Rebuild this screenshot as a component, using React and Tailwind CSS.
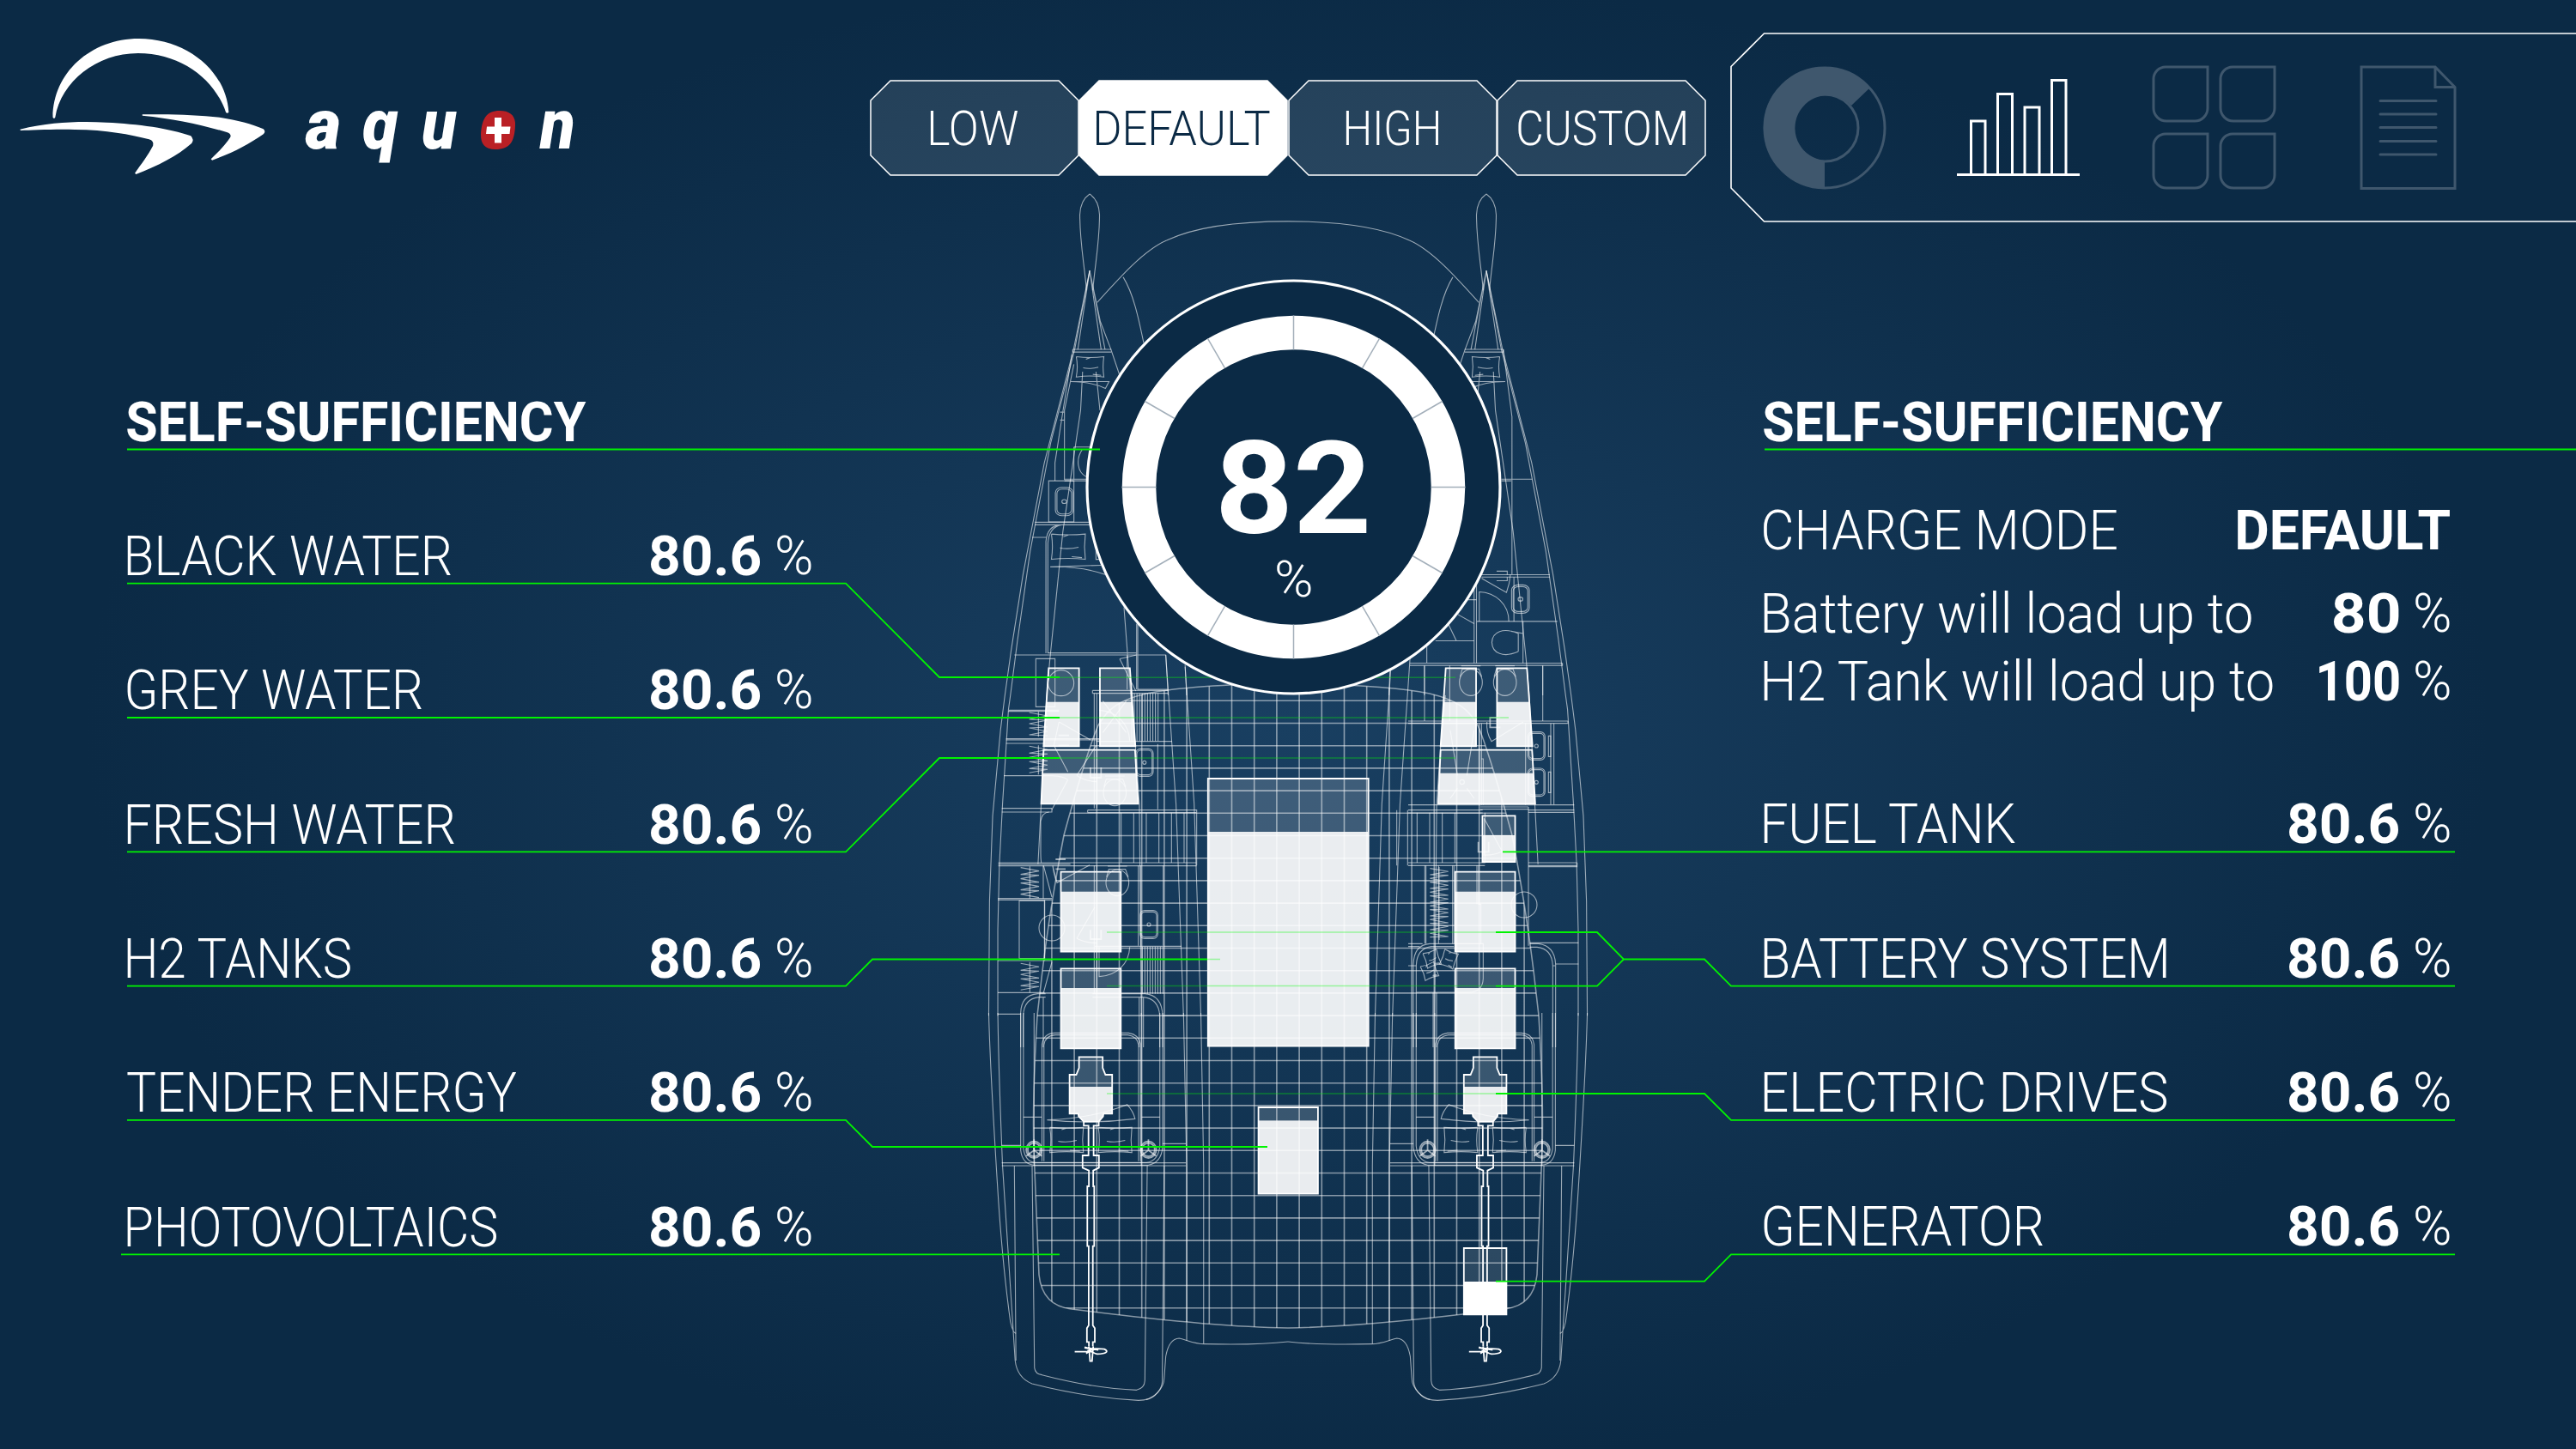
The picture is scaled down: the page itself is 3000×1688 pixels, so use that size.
import React, { useLayoutEffect, useRef, useState } from 'react';

// Stretches a line of text so that its ink is exactly `width` px wide
const Fit = ({ width, className = '', children }) => {
  const ref = useRef(null);
  const [transform, setTransform] = useState('none');

  useLayoutEffect(() => {
    const style = getComputedStyle(ref.current);
    const ctx = document.createElement('canvas').getContext('2d');
    ctx.font = `${style.fontStyle} ${style.fontWeight} ${style.fontSize} ${style.fontFamily}`;
    const m = ctx.measureText(ref.current.textContent);
    const scale = width / (m.actualBoundingBoxLeft + m.actualBoundingBoxRight);
    setTransform(`translateX(${m.actualBoundingBoxLeft * scale}px) scaleX(${scale})`);
  }, [width]);

  return (
    <span className="block shrink-0" style={{ width }}>
      <span ref={ref} className={`inline-block origin-left whitespace-nowrap align-top leading-none ${className}`} style={{ transform }}>
        {children}
      </span>
    </span>
  );
};

const MODES = [
  { label: 'LOW', width: 102 },
  { label: 'DEFAULT', width: 203, active: true },
  { label: 'HIGH', width: 108 },
  { label: 'CUSTOM', width: 195 },
];

const LEFT_ROWS = [
  { label: 'BLACK WATER', width: 377 },
  { label: 'GREY WATER', width: 343 },
  { label: 'FRESH WATER', width: 381 },
  { label: 'H2 TANKS', width: 261 },
  { label: 'TENDER ENERGY', width: 454 },
  { label: 'PHOTOVOLTAICS', width: 430 },
];

const RIGHT_ROWS = [
  { label: 'BATTERY SYSTEM', width: 469 },
  { label: 'ELECTRIC DRIVES', width: 469 },
  { label: 'GENERATOR', width: 325 },
];

const Logo = () => (
  <div className="flex h-[260px] w-[700px] shrink-0">
    <svg width="330" height="230" className="shrink-0">
      <g transform="translate(0 20) scale(0.4592 0.3333)" fill="#fff">
        <path d="M134 350 C134 195 230 75 352 75 C475 75 574 190 580 332 Q577 338 573 333 C545 218 460 126 350 126 C245 126 155 225 140 350 Q137 357 134 350Z" />
        <path d="M51 392 C130 366 200 364 270 368 C350 373 430 388 484 415 Q493 428 486 441 C450 485 400 520 345 549 L342 545 C357 515 376 482 388 449 Q391 432 378 427 C330 410 270 394 190 393 C130 391 80 396 52 396Z" />
        <path d="M361 340 C440 338 500 341 560 351 C600 360 640 373 668 391 Q675 400 668 409 C630 445 590 475 538 500 L535 496 C555 470 572 445 584 420 Q588 408 575 402 C510 375 440 355 361 344Z" />
      </g>
    </svg>
    <div className="flex gap-[28px] pl-[25px] pt-[104px] text-[82px] font-black italic leading-none text-white">
      <Fit width={40}>a</Fit>
      <Fit width={41}>q</Fit>
      <Fit width={40}>u</Fit>
      <svg width="40" height="45" viewBox="0 0 40 45" className="mt-[25px] shrink-0">
        <path d="M22 0 C34 0 41 6 40 18 C39 36 34 45 17 45 C4 45 0 38 0 28 C1 10 6 0 22 0Z" fill="#ba2025" />
        <path d="M16 8 H24 V18.500 H34.500 L33.500 27 H24 V37.500 H16 V27 H6 L7 18.500 H16Z" fill="#fff" />
      </svg>
      <Fit width={40}>n</Fit>
    </div>
  </div>
);

const ModeTab = ({ label, width, active }) => (
  <button className="relative flex h-[112px] w-[243.6px] justify-center pt-[30px]">
    <svg className="absolute inset-0" width="244" height="112">
      <polygon
        points="24,1 220,1 243,24 243,88 220,111 24,111 1,88 1,24"
        fill={active ? '#fff' : 'rgba(255,255,255,0.1)'}
        stroke="#fff"
        strokeWidth="1.500"
      />
    </svg>
    <span className={active ? 'relative text-[#0b2a45]' : 'relative text-white'}>
      <Fit width={width} className="text-[55px] font-light">{label}</Fit>
    </span>
  </button>
);

const BOX = 'h49 a0 0 0 0 1 0 0 v48 a15 15 0 0 1 -15 15 h-33 a15 15 0 0 1 -15 -15 v-34 a14 14 0 0 1 14 -14';

const IconPanel = () => (
  <div className="relative ml-[28px] mt-[38px] flex h-[222px] w-[985px] pl-[38px] pt-[38px]">
    <svg className="absolute inset-0" width="985" height="222" fill="none" stroke="#fff" strokeWidth="1.600">
      <path d="M990 1 H39.500 L1 39.500 V181 L39.500 220 H990" />
    </svg>
    <svg width="144" height="146" viewBox="-72 -73 144 146" fill="none" stroke="#3f576d" strokeWidth="3">
      <circle r="70" />
      <circle r="39" />
      <path d="M0 71 A71 71 0 1 1 53 -47 L31 -26 A38 38 0 1 0 0 38Z" fill="#3f576d" stroke="none" />
    </svg>
    <svg className="ml-[82px]" width="146" height="146" fill="none" stroke="#fff" strokeWidth="3">
      <path d="M0 127.500 H143 M16.500 127 V65 H33 V127 M47.500 127 V33.500 H64.500 V127 M79 127 V49 H96 V127 M110.500 127 V17.500 H127 V127" />
    </svg>
    <svg className="ml-[81px]" width="146" height="146" fill="none" stroke="#3f576d" strokeWidth="3">
      <path d={`M16 2 ${BOX}`} />
      <path d={`M94 2 ${BOX}`} />
      <path d={`M16 80 ${BOX}`} />
      <path d={`M94 80 ${BOX}`} />
    </svg>
    <svg className="ml-[96px]" width="114" height="146" fill="none" stroke="#3f576d" strokeWidth="3">
      <path d="M2 2 H88 L111 25.500 V143.500 H2Z M88 2 V25.500 H111" />
      <path d="M24 41.500 H89 M24 57 H89 M24 72.500 H89 M24 88.500 H89 M24 104 H89" strokeLinecap="round" />
    </svg>
  </div>
);

const Value = ({ value, width }) => (
  <div className="flex gap-[19px]">
    <Fit width={width} className="text-[65px] font-bold">{value}</Fit>
    <Fit width={40} className="text-[63px] font-light">%</Fit>
  </div>
);

const Row = ({ label, width, value = '80.6', valueWidth = 129, size = 'h-[156.3px]' }) => (
  <div className={`flex items-end justify-between ${size}`}>
    <Fit width={width} className="text-[65px] font-light">{label}</Fit>
    <Value value={value} width={valueWidth} />
  </div>
);

const Title = () => (
  <h2 className="flex h-[156.3px] items-end">
    <Fit width={535} className="text-[65px] font-bold">SELF-SUFFICIENCY</Fit>
  </h2>
);

const Hatch = ({ x, from, to, step = 9 }) => {
  const points = [];
  for (let y = from, i = 0; y <= to; y += step, i++) {
    points.push(`${i % 2 ? x + 32 : x - 32},${y + (i % 3) * 3}`);
  }
  return <polyline points={points.join(' ')} />;
};

const Stripes = ({ x, count, step, top, bottom }) =>
  Array.from({ length: count }, (_, i) => <path key={i} d={`M${x + i * step} ${top} V${bottom}`} />);

const Sink = ({ x, y, w = 58, h = 97 }) => (
  <>
    <rect x={x} y={y} width={w} height={h} rx="16" />
    <rect x={x + 4} y={y + 5} width={w - 8} height={h - 10} rx="13" />
    <circle cx={x + w / 2} cy={y + h / 2} r="6" />
  </>
);

const Toilet = ({ x, y }) => (
  <>
    <ellipse cx={x} cy={y} rx="40" ry="46" />
    <path d={`M${x - 38} ${y - 20} L${x - 30} ${y - 47} H${x + 28} L${x + 38} ${y - 20} M${x - 34} ${y - 58} H${x + 34}`} />
  </>
);

const Pillow = ({ x, y, w, h }) => (
  <path
    d={`M${x} ${y} Q${x + w / 2} ${y + 5} ${x + w} ${y} Q${x + w - 4} ${y + h / 2} ${x + w} ${y + h} Q${x + w / 2} ${y + h - 6} ${x} ${y + h} Q${x + 5} ${y + h / 2} ${x} ${y}
    M${x + w * 0.25} ${y + h * 0.55} Q${x + w / 2} ${y + h * 0.62} ${x + w * 0.8} ${y + h * 0.52} M${x + w * 0.35} ${y + 8} L${x + w * 0.5} ${y + 3} M${x + w * 0.6} ${y + h - 8} L${x + w * 0.9} ${y + h - 5}`}
  />
);

// Sheets of the deck plan: each one has its own drawing units
const Sheet = ({ at, children }) => (
  <g transform={at} className="[&_*]:[vector-effect:non-scaling-stroke]">{children}</g>
);

const BOW = 'translate(1140 210) scale(0.4592 0.38265)';
const MID = 'translate(1140 750) scale(0.4592 0.33333)';
const STERN = 'translate(1140 1180) scale(0.4592 0.33333)';
const PORT = 'translate(1150 740) scale(0.33333)';
const STARBOARD = 'translate(1640 740) scale(0.33333)';
const MIRROR = 'translate(1568 0) scale(-1 1)';

const Mirrored = ({ children }) => (
  <>
    <g>{children}</g>
    <g transform={MIRROR}>{children}</g>
  </>
);

const DECK =
  'M1500 796 C1430 797 1370 801 1335 808 C1305 815 1290 825 1279 845 C1270 865 1252 925 1239 973 C1228 1030 1219 1090 1214 1131 L1208 1183 C1204 1250 1203 1310 1204 1340 L1210 1485 C1212 1505 1222 1522 1248 1525 C1310 1533 1420 1546 1500 1547 ' +
  'C1580 1546 1690 1533 1752 1525 C1778 1522 1788 1505 1790 1485 L1796 1340 C1797 1310 1796 1250 1792 1183 L1786 1131 C1781 1090 1772 1030 1761 973 C1748 925 1730 865 1721 845 C1710 825 1695 815 1665 808 C1630 801 1570 797 1500 796Z';

const Deck = () => (
  <g stroke="rgba(255,255,255,0.5)" strokeWidth="1.600">
    <clipPath id="deck">
      <path d={DECK} />
    </clipPath>
    <path d={DECK} />
    <g clipPath="url(#deck)">
      {Array.from({ length: 22 }, (_, i) => (
        <path key={i} d={`M${1224.9 + i * 26.2} 790 V1550`} />
      ))}
      {Array.from({ length: 28 }, (_, i) => (
        <path key={i} d={`M1190 ${816.3 + i * 26.2} H1810`} />
      ))}
    </g>
  </g>
);

const Plan = () => (
  <g stroke="rgba(255,255,255,0.58)" strokeWidth="1.100">
    <Sheet at={BOW}>
      <Mirrored>
        <path d="M281 42 C265 55 257 75 256 105 C256 190 267 250 273 335 M281 42 C297 55 305 75 306 105 C306 190 295 250 289 335" />
        <path d="M281 275 L240 515 L166 860 L112 1200 L82 1430 L66 1568" />
        <path d="M281 275 L243 515 L182 800 L130 1130 L98 1400 L80 1568" />
        <path d="M281 275 L251 515 M281 275 L310 515 M281 275 L320 515 M281 275 L308 430 L335 515 L356 590" />
        <path d="M300 372 C360 292 420 212 476 183 C560 135 680 125 784 125" />
        <path d="M366 295 C392 345 405 420 418 495" />
        <path d="M238 515 H336 M238 523 H336 M238 515 V523" />
        <Pillow x={247} y={537} w={70} h={62} />
        <path d="M233 613 H330 L321 634 Q285 613 233 613 M263 583 L258 700 L213 1070 L180 1460 L172 1568 M297 583 L307 700" />
      </Mirrored>
      <path d="M236 530 L220 650 L193 860 V915 M241 560 L217 700 V912 M206 706 H217 M206 730 H217 M217 910 H275 M217 915 H275 M241 812 H283 M241 812 V912 M262 820 C245 850 250 890 272 902" />
      <rect x="177" y="915" width="64" height="125" />
      <Sink x={194} y={935} w={45} h={86} />
      <path d="M142 1041 H285 M142 1049 H285 M170 1440 V1100 Q173 1052 207 1049 M175 1440 V1105 Q178 1055 210 1049 M135 1087 H172" />
      <Pillow x={184} y={1077} w={86} h={77} />
      <path d="M297 1120 V1154 H308 M181 1177 L310 1172 M181 1177 Q260 1175 320 1200 M90 1445 H475 M175 1439 H400 M400 1350 V1550 M403 1350 V1550 H480 M368 1300 L385 1568" />
      <path d="M357 1457 L400 1445 M357 1457 L398 1555 M474 1445 L480 1568 M523 1475 L527 1568" />
      <path d="M1330 515 L1352 720 V1200 M1352 720 M1325 910 H1403 M1325 915 H1350 M1275 1201 H1448 M1275 1208 H1448 M1256 1208 V1470 M1262 1208 V1470 M1262 1343 H1467" />
      <Sink x={1351} y={1232} w={45} h={86} />
      <path d="M1269 1343 V1253 C1310 1255 1344 1290 1344 1343 M1275 1212 L1338 1255 Q1346 1230 1348 1200 M1357 1208 V1343 M1380 1343 V1470 M1368 1380 V1435 M1368 1380 C1330 1360 1302 1375 1301 1407 C1302 1440 1330 1455 1368 1435 M1350 1373 L1380 1380 M1313 1190 H1340 V1201 M1313 1219 H1340 V1208" />
      <path d="M1158 1402 H1256 M1136 1420 V1470 M1093 1470 H1480 M1093 1477 H1480 V1470 M1190 1350 L1211 1402 M1215 1322 L1256 1350 M1240 1277 H1262 M1130 1477 V1568 M1430 1477 V1568 M1043 1480 L1040 1568" />
    </Sheet>

    <Sheet at={MID}>
      <Mirrored>
        <path d="M66 180 L55 300 L35 600 L27 900 L25 1300" />
        <path d="M80 180 L75 230 L60 560 L52 770 L48 1000 V1300" />
        <path d="M474 40 L500 560 L519 1300 M523 80 L546 560 L563 1300 M385 180 L397 358 L407 560 L412 1300" />
        <path d="M172 180 L158 560 L150 770" />
      </Mirrored>
    </Sheet>

    <Sheet at={PORT}>
      <path d="M75 262 H250 M73 266 H250 M65 362 H395 M65 366 H395 M65 378 H200 M380 371 H645 M57 491 H225 M50 605 H225 M50 618 H225 V605 M350 611 H731 V804 M350 620 H731 M350 611 V620 M38 795 H731 M38 806 H731 M38 800 H290 M36 920 H225 M36 925 H225 M36 1137 H225 M36 1249 H200 M36 1324 H116 M375 1087 H678 M367 193 H632 M367 203 H632 M367 193 V203" />
      <path d="M488 70 V190 M373 203 V605 M382 203 V605 M373 805 V1250 M382 805 V1250 M527 805 V1085 M536 805 V1085 M614 805 V1085 M195 805 V920 M200 925 V1137 M595 380 V608" />
      <rect x="169" y="82" width="67" height="168" />
      <rect x="111" y="928" width="88" height="202" />
      <circle cx="257" cy="167" r="45" />
      <circle cx="225" cy="1023" r="45" />
      <path d="M178 266 V355 M178 385 V487 M148 808 V920 M148 1142 V1249" />
      <Hatch x={178} from={270} to={352} />
      <Hatch x={178} from={388} to={482} />
      <Hatch x={148} from={812} to={912} />
      <Hatch x={148} from={1147} to={1243} />
      <Stripes x={504} count={11} step={9.2} top={203} bottom={370} />
      <Stripes x={541} count={9} step={9} top={1088} bottom={1253} />
      <Stripes x={467} count={6} step={44} top={620} bottom={795} />
      <Sink x={518} y={397} w={61} h={96} />
      <Sink x={533} y={962} w={62} h={98} />
      <Toilet x={445} y={550} />
      <Toilet x={454} y={865} />
      <path d="M188 795 Q186 780 186 765 V650 Q190 620 215 618 M228 805 L243 865 L357 803 M228 805 Q232 840 243 865 M196 805 L225 915 M196 1249 L225 1142 M390 1090 V1193 C450 1190 495 1150 497 1090 M312 490 L380 385 M312 490 Q340 510 382 512 M312 1060 L375 950 M312 1060 Q340 1075 382 1076 M232 385 L281 478 M281 505 L225 610 M225 491 Q265 493 281 505 M250 303 L360 366 M250 303 L232 385" />
      <path d="M403 230 L485 340 M485 230 L403 340 M390 262 C450 265 495 310 497 370" />
      <path d="M238 783 H273 M238 817 H273 M248 350 H285 M248 385 H285 M360 462 V498 H397 V462 M360 1030 V1062 H397 V1030" strokeWidth="1.800" />
      <path d="M203 1253 H175 Q118 1258 116 1320 V1440 M203 1265 H180 Q127 1270 125 1330 V1440 M367 1253 H550 Q610 1258 612 1330 V1440 M367 1265 H545 Q598 1270 602 1330 V1440 M612 1330 H685 M195 1265 V1440 M530 1265 V1440 M545 1265 V1440" />
    </Sheet>

    <Sheet at={STARBOARD}>
      <path d="M0 300 H558 M0 308 H558 V300 M0 593 H580 M0 611 H260 M0 621 H260 M252 600 H420 M252 608 H420 M420 611 H580 M420 619 H580 M0 795 H268 V620 M0 805 H268 M420 795 H590 M420 805 H590 M420 809 H590 V795 M425 1075 H595 M515 1149 H595 M0 1078 H50 M0 1088 H40 M0 1155 H28" />
      <path d="M57 106 V300 M145 106 V300 M470 106 V300 M498 308 V592 M509 308 V592 M248 308 V593 M256 308 V593 M410 308 V593 M58 805 V1078 M62 805 V1078 M106 805 V1078 M155 805 V1078 M160 805 V1078 M240 805 V940 M246 805 V940 H254 V1078 M420 600 V1085 M-40 611 V805 M-2 611 V805" />
      <Stripes x={31} count={4} step={44} top={620} bottom={795} />
      <Toilet x={219} y={165} />
      <Toilet x={338} y={165} />
      <Sink x={418} y={338} w={60} h={98} />
      <Sink x={418} y={465} w={60} h={98} />
      <rect x="490" y="352" width="8" height="72" />
      <rect x="490" y="478" width="8" height="72" />
      <circle cx="405" cy="942" r="45" />
      <path d="M108 810 V1065" />
      <Hatch x={108} from={815} to={1062} step={8} />
      <path d="M147 332 L172 490 M230 332 L205 490 M147 570 L172 535 M230 570 L205 535 M256 432 H262 V593 M275 303 Q272 340 291 371 L402 303 M265 640 L328 755 Q300 770 262 768 M265 640 V768" />
      <circle cx="188" cy="513" r="8" />
      <path d="M322 288 H286 V322 H322 M245 722 V757 H281 V722" strokeWidth="1.800" />
      <g transform="rotate(-18 82 1130)"><Pillow x={58} y={1104} w={50} h={54} /></g>
      <g transform="rotate(20 142 1132)"><Pillow x={117} y={1104} w={50} h={56} /></g>
      <g transform="rotate(-20 75 1175)"><Pillow x={50} y={1148} w={50} h={52} /></g>
      <path d="M18 1440 V1150 Q20 1082 75 1078 H262 V1200 Q260 1248 210 1248 H28 M28 1440 V1155 Q30 1095 80 1088 H160 M87 1248 V1440 M99 1248 V1440 M425 1078 H455 Q512 1085 515 1150 V1440 M425 1090 H450 Q502 1095 505 1155 V1440 M505 1155 H515" />
    </Sheet>

    <Sheet at={STERN}>
      <Mirrored>
        <path d="M25 0 C28 180 38 400 47 600 C58 850 72 1000 80 1080 Q86 1118 94 1120 M48 0 C50 200 56 400 60 534 L92 1215 Q97 1275 135 1296 C220 1326 310 1347 405 1354 C445 1354 470 1310 470 1275 L474 1200 C480 1155 492 1138 508 1137 C530 1144 545 1156 572 1157 C660 1160 740 1156 784 1149" />
        <path d="M424 1352 C450 1345 464 1310 465 1290 L470 534 M135 534 L141 1240 Q143 1262 160 1265 C235 1292 320 1314 400 1318 Q420 1312 421 1285 L427 534 M90 534 L94 1215" />
        <path d="M58 524 H525 M58 534 H525 M519 0 L527 534 V1145 M563 0 L570 534 V1156" />
        <path d="M106 0 V480 Q110 528 140 532 H430 Q462 524 466 470 V0 M113 0 V475 Q118 520 143 523 H425 Q455 518 459 465 V0" />
        <path d="M160 518 V110 Q164 72 192 70 H380 Q406 75 410 110 V518 M165 518 V112 Q168 79 194 77 H378 Q402 82 405 112 V518 M113 364 H160 M410 364 H459 M58 463 H106 M466 457 H525 M140 0 V534 M412 0 V534" />
        <Pillow x={180} y={400} w={85} h={88} />
        <Pillow x={303} y={400} w={85} h={88} />
        <path d="M173 374 Q290 368 376 320 Q392 345 396 370 Q280 390 173 374" />
        {[140, 430].map((x) => (
          <g key={x} strokeWidth="1.800">
            <ellipse cx={x} cy="478" rx="20" ry="29" />
            <ellipse cx={x} cy="478" rx="16" ry="23" />
            <path d={`M${x} 442 V480 L${x - 20} 500 M${x} 480 L${x + 20} 500`} />
          </g>
        ))}
      </Mirrored>
    </Sheet>
  </g>
);

const Tank = ({ points, split, id, solid }) => (
  <>
    <clipPath id={id}>
      <polygon points={points} />
    </clipPath>
    <g clipPath={`url(#${id})`} stroke="none">
      <rect x="0" y="0" width="1568" height={split} fill={solid ? 'rgba(255,255,255,0.12)' : 'rgba(255,255,255,0.17)'} />
      <rect x="0" y={split} width="1568" height="1500" fill={solid ? '#fff' : 'rgba(255,255,255,0.91)'} />
    </g>
    <polygon points={points} />
  </>
);

const Hull = ({ side }) => (
  <>
    <Tank id={`${side}-a`} points="177,85 254,85 254,358 164,358" split={203} />
    <Tank id={`${side}-b`} points="307,85 383,85 397,358 307,358" split={203} />
    <Tank id={`${side}-c`} points="164,371 396,371 404,559 158,559" split={452} />
  </>
);

const Drive = ({ side }) => (
  <>
    <path d="M266 380 V394 H278 V498 H263 V541 L279 551 V606 H275 V815 H278.500 V1092 L274 1102 V1150 H279 V1165 M304 380 V394 H291 V498 H304.500 V541 L290 551 V606 H292.500 V815 H289 V1092 L294 1102 V1150 H289 V1165" />
    <path d="M279 1165 L282 1217 H287 L290 1165 M243 1184 H284 M268 1168 C285 1178 300 1170 318 1175 C330 1182 324 1192 300 1192 C290 1190 288 1182 275 1180 M268 1170 L303 1178 M272 1190 L292 1172" />
    <Tank
      id={`${side}-drive`}
      points="254,154 314,154 314,192 321,216 338,216 338,352 316,352 315,362 304,380 266,380 253,362 252,352 230,352 230,216 247,216 254,192"
      split={258}
    />
  </>
);

const Tanks = () => (
  <g stroke="#fff" strokeWidth="1.800">
    <Sheet at={MID}>
      <Hull side="port" />
      <g transform="translate(1007 0)">
        <Hull side="starboard" />
      </g>
      <Tank id="h2" points="581,471 988,471 988,1406 581,1406" split={657} />
      <Tank id="fuel" points="1277,601 1360,601 1360,762 1277,762" split={669} />
      <Tank id="battery-1" points="208,797 360,797 360,1076 208,1076" split={866} />
      <Tank id="battery-2" points="208,1135 360,1135 360,1414 208,1414" split={1203} />
      <Tank id="battery-3" points="1208,797 1360,797 1360,1076 1208,1076" split={866} />
      <Tank id="battery-4" points="1208,1135 1360,1135 1360,1414 1208,1414" split={1203} />
    </Sheet>
    <Sheet at={STERN}>
      <Drive side="port" />
      <g transform="translate(1000 0)">
        <Drive side="starboard" />
      </g>
      <Tank id="tender" points="709,330 860,330 860,632 709,632" split={376} />
      <Tank id="generator" points="1230,822 1338,822 1338,1054 1230,1054" split={939} solid />
    </Sheet>
  </g>
);

const Vessel = () => (
  <svg className="absolute inset-0" width="3000" height="1688" fill="none">
    <Deck />
    <Plan />
    <Tanks />
    <path
      d="M1234 789.300 H1695 M1234 836 H1757 M1234 883 H1695 M1289 1086 H1742 M1289 1148.500 H1742 M1289 1274 H1742 M1406 1117.500 H1421"
      stroke="#00ff00"
      strokeOpacity="0.35"
      strokeWidth="1.600"
    />
  </svg>
);

const Leaders = () => (
  <svg className="absolute inset-0" width="3000" height="1688" fill="none" stroke="#00f400" strokeWidth="1.800">
    <path d="M148 523.500 H1281 M2055 523.500 H3000" />
    <path d="M148 679.700 H985 L1094 789 H1234 M148 836 H1234 M148 992.300 H985 L1094 883 H1234" />
    <path d="M148 1148.600 H985 L1016 1117.500 H1406 M148 1304.800 H985 L1016 1336 H1476 M141 1461.300 H1234" />
    <path d="M1750 992.300 H2859 M1742 1086 H1860 L1891 1117.500 L1860 1148.600 H1742 M1891 1117.500 H1985 L2016 1148.600 H2859" />
    <path d="M1742 1274 H1985 L2016 1304.800 H2859 M1742 1492.700 H1985 L2016 1461.300 H2859" />
  </svg>
);

const Gauge = () => (
  <div className="absolute left-[1264px] top-[325px] flex h-[485px] w-[485px] flex-col items-center pt-[170px] text-white">
    <svg className="absolute inset-0" width="485" height="485" viewBox="-242.500 -242.500 485 485">
      <circle r="240.500" fill="#0b2a45" stroke="#fff" strokeWidth="3.200" />
      <circle r="180" fill="none" stroke="#fff" strokeWidth="39.500" />
      {Array.from({ length: 12 }, (_, i) => (
        <path key={i} d="M0 -160 V-200" stroke="#a3afba" strokeWidth="1.500" transform={`rotate(${i * 30})`} />
      ))}
    </svg>
    <div className="relative flex h-[150px]">
      <Fit width={171} className="text-[150px] font-bold">82</Fit>
    </div>
    <div className="relative flex">
      <Fit width={40} className="text-[60px] font-light">%</Fit>
    </div>
  </div>
);

const App = () => {
  return (
    <div className="relative flex h-[1688px] w-[3000px] flex-col overflow-hidden bg-[#0b2a45] bg-[radial-gradient(ellipse_1400px_880px_at_50%_50%,#193f61,#0b2a45)] font-[Roboto,sans-serif] text-white">
      <Vessel />
      <Gauge />
      <Leaders />

      <header className="relative flex h-[260px]">
        <Logo />
        <nav className="ml-[312.500px] flex pt-[92.500px]">
          {MODES.map((mode) => (
            <ModeTab key={mode.label} {...mode} />
          ))}
        </nav>
        <IconPanel />
      </header>

      <main className="relative flex justify-between pl-[148px] pr-[147px] pt-[108.500px]">
        <section className="w-[797px]">
          <Title />
          {LEFT_ROWS.map((row) => (
            <Row key={row.label} {...row} />
          ))}
        </section>

        <section className="w-[799px]">
          <Title />
          <div className="flex h-[126.600px] items-end justify-between">
            <Fit width={411} className="text-[65px] font-light">CHARGE MODE</Fit>
            <Fit width={247} className="text-[65px] font-bold">DEFAULT</Fit>
          </div>
          <Row label="Battery will load up to" width={568} value="80" valueWidth={77} size="h-[97px]" />
          <Row label="H2 Tank will load up to" width={594} value="100" valueWidth={93} size="h-[78.400px]" />
          <Row label="FUEL TANK" width={294} size="h-[166.600px]" />
          {RIGHT_ROWS.map((row) => (
            <Row key={row.label} {...row} />
          ))}
        </section>
      </main>
    </div>
  );
};

export default App;
